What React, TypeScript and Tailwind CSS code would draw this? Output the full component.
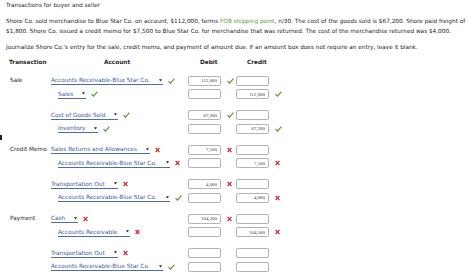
import type { ReactNode } from "react";

type Line = {
  acct: string;
  ok: boolean;
  indent?: boolean;
  debit?: string;
  dOk?: boolean;
  credit?: string;
  cOk?: boolean;
};

type Group = { label: string; pairs: Line[][] };

const groups: Group[] = [
  {
    label: "Sale",
    pairs: [
      [
        { acct: "Accounts Receivable-Blue Star Co.", ok: true, debit: "112,000", dOk: true },
        { acct: "Sales", ok: true, indent: true, credit: "112,000", cOk: true },
      ],
      [
        { acct: "Cost of Goods Sold", ok: true, debit: "67,200", dOk: true },
        { acct: "Inventory", ok: true, indent: true, credit: "67,200", cOk: true },
      ],
    ],
  },
  {
    label: "Credit Memo",
    pairs: [
      [
        { acct: "Sales Returns and Allowances", ok: false, debit: "7,500", dOk: false },
        { acct: "Accounts Receivable-Blue Star Co.", ok: false, indent: true, credit: "7,500", cOk: false },
      ],
      [
        { acct: "Transportation Out", ok: false, debit: "4,000", dOk: false },
        { acct: "Accounts Receivable-Blue Star Co.", ok: true, indent: true, credit: "4,000", cOk: false },
      ],
    ],
  },
  {
    label: "Payment",
    pairs: [
      [
        { acct: "Cash", ok: false, debit: "104,500", dOk: false },
        { acct: "Accounts Receivable", ok: false, indent: true, credit: "104,500", cOk: false },
      ],
      [
        { acct: "Transportation Out", ok: false },
        { acct: "Accounts Receivable-Blue Star Co.", ok: true },
      ],
    ],
  },
];

function Mark({ ok }: { ok: boolean }) {
  if (ok) {
    return (
      <svg width="7" height="6" viewBox="0 0 7 6" className="shrink-0">
        <path d="M0.6 3.3 L2.5 5.1 L6.4 0.7" fill="none" stroke="#5a9a3a" strokeWidth="1.2" />
      </svg>
    );
  }
  return (
    <svg width="5" height="6" viewBox="0 0 5 6" className="shrink-0">
      <path d="M0.6 0.8 L4.4 5.2 M4.4 0.8 L0.6 5.2" fill="none" stroke="#cf2b2b" strokeWidth="1.3" />
    </svg>
  );
}

function Select({ children }: { children: ReactNode }) {
  return (
    <span className="inline-flex items-center border-b border-[#4d6ca8] text-[#3d5c9b] leading-[8px]">
      <span>{children}</span>
      <svg width="3" height="3" viewBox="0 0 3 3" className="ml-[9px] mr-[1px]">
        <path d="M0 0.3 L3 0.3 L1.5 2.6 Z" fill="#222" />
      </svg>
    </span>
  );
}

function Box({ value, ok }: { value?: string; ok?: boolean }) {
  return (
    <div className="flex w-[48px] items-center">
      <div className="flex h-[10px] w-[33px] items-center justify-end rounded-[2px] border-[1.5px] border-[#b3b3b3] pr-[3px] font-['Liberation_Serif',serif] text-[4.9px] text-[#333]">
        {value}
      </div>
      {value !== undefined && ok !== undefined ? (
        <span className="ml-[6px]">
          <Mark ok={ok} />
        </span>
      ) : null}
    </div>
  );
}

export default function App() {
  return (
    <div className="relative h-[275px] w-[474px] overflow-hidden bg-white px-[6px] font-['DejaVu_Sans',sans-serif] text-[5.75px] text-[#262626]">
      <div className="absolute left-0 top-[135px] h-[5px] w-[2px] bg-[#222]" />
      <p className="leading-[10px]">Transactions for buyer and seller</p>
      <p className="mt-[6px] leading-[10px]">
        Shore Co. sold merchandise to Blue Star Co. on account, $112,000, terms <span className="text-[#5a9a3a]">FOB shipping point</span>,
        n/30. The cost of the goods sold is $67,200. Shore paid freight of $1,800. Shore Co. issued a credit memo for $7,500 to Blue Star
        Co. for merchandise that was returned. The cost of the merchandise returned was $4,000.
      </p>
      <p className="mt-[6px] leading-[10px]">
        Journalize Shore Co.'s entry for the sale, credit memo, and payment of amount due. If an amount box does not require an entry,
        leave it blank.
      </p>

      <div className="mt-[5px] flex font-bold leading-[10px]">
        <span className="w-[98px] pl-[3px]">Transaction</span>
        <span className="w-[96px]">Account</span>
        <span className="w-[47px]">Debit</span>
        <span>Credit</span>
      </div>

      <div className="mt-[7px] flex flex-col gap-[7.5px]">
        {groups.map((g) =>
          g.pairs.map((pair, pi) => (
            <div key={g.label + pi} className="flex flex-col">
              {pair.map((line, li) => (
                <div key={li} className="flex h-[13.5px] items-center">
                  <span className="w-[45px] pl-[4px]">{pi === 0 && li === 0 ? g.label : ""}</span>
                  <div className={`flex w-[137px] items-center ${line.indent ? "pl-[7px]" : ""}`}>
                    <Select>{line.acct}</Select>
                    <span className="ml-[5px]">
                      <Mark ok={line.ok} />
                    </span>
                  </div>
                  <Box value={line.debit ?? (li === 0 ? "" : undefined)} ok={line.dOk} />
                  <Box value={line.credit ?? ""} ok={line.cOk} />
                </div>
              ))}
            </div>
          ))
        )}
      </div>
    </div>
  );
}
